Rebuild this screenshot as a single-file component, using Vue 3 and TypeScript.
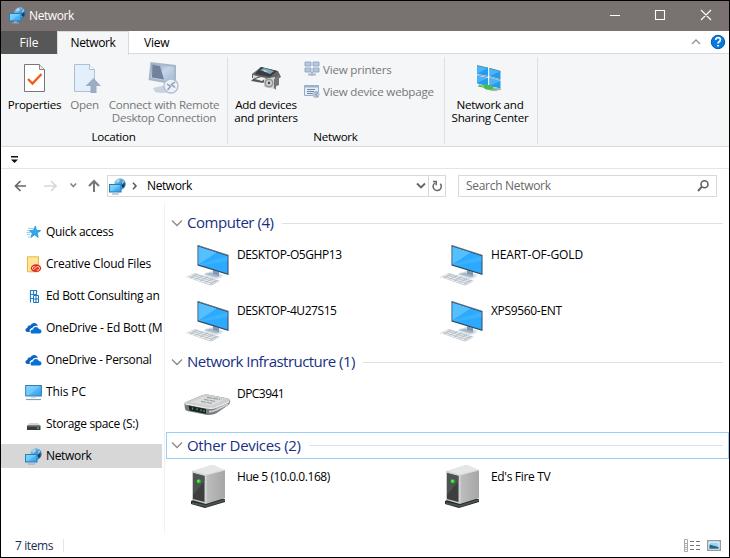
<script setup lang="ts">
interface NavItem { label: string; icon: string; fit: string; selected?: boolean }
interface Device { name: string; icon: string; fit: string }
interface Group { title: string; cls: string; devices: Device[] }

const navItems: NavItem[] = [
  { label: 'Quick access', icon: 'star', fit: 'snug' },
  { label: 'Creative Cloud Files', icon: 'creative', fit: 'normal' },
  { label: 'Ed Bott Consulting an', icon: 'building', fit: 'snug' },
  { label: 'OneDrive - Ed Bott (M', icon: 'cloud', fit: 'normal' },
  { label: 'OneDrive - Personal', icon: 'cloud', fit: 'snug' },
  { label: 'This PC', icon: 'pc', fit: 'loose' },
  { label: 'Storage space (S:)', icon: 'drive', fit: 'snug' },
  { label: 'Network', icon: 'network', fit: 'snug', selected: true },
]

const groups: Group[] = [
  {
    title: 'Computer (4)',
    cls: 'computers',
    devices: [
      { name: 'DESKTOP-O5GHP13', icon: 'desktop', fit: 'tight' },
      { name: 'HEART-OF-GOLD', icon: 'desktop', fit: 'loose' },
      { name: 'DESKTOP-4U27S15', icon: 'desktop', fit: 'tight' },
      { name: 'XPS9560-ENT', icon: 'desktop', fit: 'snug' },
    ],
  },
  {
    title: 'Network Infrastructure (1)',
    cls: 'infrastructure',
    devices: [{ name: 'DPC3941', icon: 'router', fit: 'tighter' }],
  },
  {
    title: 'Other Devices (2)',
    cls: 'others',
    devices: [
      { name: 'Hue 5 (10.0.0.168)', icon: 'server', fit: 'tight' },
      { name: "Ed's Fire TV", icon: 'server', fit: 'snug' },
    ],
  },
]
</script>

<template>
  <div class="window">
    <svg class="defs" width="0" height="0" aria-hidden="true">
      <defs>
        <linearGradient id="gScreen" x1="0" y1="0" x2="1" y2="1">
          <stop offset="0" stop-color="#7fd4ff" /><stop offset="1" stop-color="#2b9df0" />
        </linearGradient>
        <linearGradient id="gGlobe" x1="0" y1="0" x2="1" y2="1">
          <stop offset="0" stop-color="#9fd3f0" /><stop offset=".5" stop-color="#4796cc" /><stop offset="1" stop-color="#174f87" />
        </linearGradient>
        <linearGradient id="gSide" x1="0" y1="0" x2="1" y2="0">
          <stop offset="0" stop-color="#bebebe" /><stop offset="1" stop-color="#a6a6a6" />
        </linearGradient>
        <linearGradient id="gFaded" x1="0" y1="0" x2="1" y2="1">
          <stop offset="0" stop-color="#8e9fba" /><stop offset=".5" stop-color="#c5d5e9" /><stop offset="1" stop-color="#9db5d5" />
        </linearGradient>
      </defs>
      <symbol id="i-network" viewBox="0 0 17 17">
        <circle cx="11" cy="6" r="5.7" fill="url(#gGlobe)" />
        <path d="M7 3 9 1 11 2 10 4 8 5zM12 1l2 1-1 3 2 2 1 1-1-5-3-3zM11 8l3 0-1 3z" fill="#b7def2" opacity=".8" />
        <path d="M15 4q2 3-1 6l-2-2 2-2z" fill="#123f72" />
        <rect x=".5" y="6.5" width="11.5" height="7.5" fill="url(#gScreen)" stroke="#2581b5" />
        <path d="M1 7h10L3 13H1z" fill="#88d8fb" opacity=".5" />
        <path d="M3 16h7" stroke="#8da4b4" /><path d="M5 15h3" stroke="#b5c4cd" />
      </symbol>
      <symbol id="i-star" viewBox="0 0 17 17">
        <path d="M10.3 2.2l1.2 4.2 4.2.2-3.5 2.5 1 4.3-3.5-2.6-3.8 2.6 1.4-4.3-3.2-2.5 4.1-.2z" fill="#2eaaf3" stroke="#1784cd" stroke-width=".7" />
        <path d="M3 4.5h5M2 6.5h3M1.5 8.5h4M2 10.5h3M3 13h2" stroke="#75c5ee" stroke-width=".8" />
      </symbol>
      <symbol id="i-creative" viewBox="0 0 17 17">
        <path d="M2.5.8h11v15h-11z" fill="#ffe596" stroke="#e4b846" />
        <ellipse cx="11" cy="12.2" rx="5.2" ry="3.9" fill="#e52b1e" />
        <path d="M11.6 14q1.4.6 2.5-.4 1-1.3-.1-2.6-1.4-1-2.8.2l-1.6 1.8q-1 .9-1.9 0-.8-1 .1-2 1.3-1 2.6.2" fill="none" stroke="#ffe7d6" stroke-width=".9" />
      </symbol>
      <symbol id="i-building" viewBox="0 0 17 17">
        <path d="M5.5 14.5V2M8.500 2v5M11.5 2v5M5 2.500h7M5 6.500h7M5 10.500h3" stroke="#2680c8" fill="none" stroke-width="1.2" />
        <path d="M8.5 7.5h5v7h-5zM11 8v6M9 11h4" fill="#fff" stroke="#1675c7" />
      </symbol>
      <symbol id="i-cloud" viewBox="0 0 17 17">
        <path d="M5 12H2.5C-.4 12-.1 8.2 2.3 8 2.5 5.5 4.3 5.4 5.3 5.6 7 2 12 2.3 12.8 6 9.7 5.2 8 6.3 7.4 8 4.9 8.2 4.2 10.3 5 12z" fill="#0866c1" />
        <path d="M7.3 13.6C4.7 13.3 4.9 9.5 8 9.5 8.7 6 13.2 6.4 13.8 9.1 17 9 17.4 13 14.6 13.6z" fill="#0871d4" />
      </symbol>
      <symbol id="i-pc" viewBox="0 0 17 17">
        <rect x=".7" y="1.5" width="15.7" height="10.5" fill="url(#gScreen)" stroke="#397aa7" />
        <path d="M1 2h14L4 11.5H1z" fill="#9be1ff" opacity=".35" /><path d="M1 15.5h15" stroke="#879eae" stroke-width="1.2" /><path d="M6 13.5h5" stroke="#cbd8df" />
      </symbol>
      <symbol id="i-drive" viewBox="0 0 17 17">
        <path d="M4.5 7H13l2.5 3H2z" fill="#d4d4d4" /><rect x="2" y="9.5" width="13.5" height="4.5" rx=".5" fill="#383b3b" />
        <path d="M2.5 10.3H15" stroke="#686b69" /><rect x="12" y="11.5" width="2" height="1.2" fill="#36e94d" />
      </symbol>
      <symbol id="i-desktop" viewBox="0 0 44 42">
        <path d="M19 28l7-2 12 4-4 3.3q-6 1.4-11 0L18 30z" fill="#dce3ea" />
        <path d="M18.5 29l7-1.5 9 3.4-4 1.6z" fill="#a9b9ca" /><path d="M27 25l6 2v4l-6-2z" fill="#8499ad" />
        <path d="M11.5.3l31 10V30l-31-9.500z" fill="#31475a" />
        <path d="M12.5 1.8l29 9.2v17.5l-29-9z" fill="#2caaff" />
        <path d="M12.5 1.8l18 5.8-18 11.7z" fill="#56c0ff" /><path d="M12.5 19.4L41.5 11v5L16 20.6z" fill="#47b7fb" opacity=".6" />
        <path d="M11.5.3l31 10" stroke="#667481" stroke-width=".8" />
        <path d="M0 32l9-4 25 8-9 4.5z" fill="#b8bec5" /><path d="M0 32l9-4 25 8-9 3.7z" fill="#edf0f3" />
        <path d="M3 31.2l24 7.4M6 30l24 7.3M8 28.8l24 7.3M4 33l8-4M9 34.5l8-4M14 36l8-4M19 37.4l8-4M24 39l8-4" stroke="#a9b3bc" stroke-width=".7" />
      </symbol>
      <symbol id="i-router" viewBox="0 0 47 22">
        <path d="M.5 10Q0 9 2 8L18 1.200Q21 0 25 .7L44 4.500Q47 5.500 46 8.500 46 10 43 12L32 19.500Q28 21.500 22 20.800L3 17Q.8 16 .8 14z" fill="#777c7e" />
        <path d="M.5 10Q0 9 2 8L18 1.200Q21 0 25 .7L44 4.500Q47 5.500 45 8L32 13.500q-4 1.600-10 .6z" fill="#cdd0d1" />
        <path d="M7 8.500L20 2.500 40 6 28 11.500z" fill="#dbdddd" />
        <path d="M17 7.500l12 2M20 5.500l12 2M23 3.500l13 2" stroke="#8f9597" stroke-width="1" stroke-dasharray="5 1" />
        <path d="M1.500 10L22 14q6 1 10-.500L45 8" fill="none" stroke="#f0f1f1" stroke-width="1.200" />
        <path d="M4.500 11.500L22 15v4.800L5.500 16.500z" fill="#1b2221" /><path d="M8.500 13.500v2M13 14.300v2M17 15.200v2M20 16v2" stroke="#46a66a" stroke-width="1.2" />
        <path d="M25 17.500q4 .3 7-1.500l12-6" fill="none" stroke="#c9cccc" stroke-width="2" />
      </symbol>
      <symbol id="i-server" viewBox="0 0 36 44">
        <path d="M0 36l13-6 21 4v3L14 43 0 39z" fill="#252a2c" /><path d="M1 37l14 3 19-6v2l-19 6-14-3z" fill="#4c5254" />
        <path d="M1 6L20 0q2-.4 4 .5L34 5 15 11z" fill="#e5e6e6" /><path d="M1 6l14 4v29L1 35z" fill="#cbcdcd" />
        <path d="M2 8l11.5 3v26L2 34z" fill="#3d3f3e" /><path d="M2 8l11.5 3v5L2 30z" fill="#555856" opacity=".8" />
        <path d="M15 10L34 5v28l-19 6z" fill="url(#gSide)" /><path d="M1 6l14 4 19-5M15 10v28" fill="none" stroke="#d8dada" />
        <circle cx="7.7" cy="16.3" r="2" fill="#1cdf2e" /><circle cx="7.3" cy="15.8" r=".8" fill="#83fc69" />
      </symbol>
    </svg>

    <header class="titlebar">
      <svg class="title-icon"><use href="#i-network" /></svg>
      <span class="title">Network</span>
      <svg class="caption-buttons" width="126" height="30" viewBox="0 0 126 30" fill="none" stroke="#fff" stroke-width="1.1">
        <path d="M7 14.5h10M52.5 9.5h9v9h-9zM98 9l10 10M108 9L98 19" />
      </svg>
    </header>

    <nav class="tabs">
      <span class="file">File</span><span class="tab active">Network</span><span class="tab view">View</span>
      <svg class="help" width="40" height="22" viewBox="0 0 40 22">
        <path d="M3 13l4-4 4 4" fill="none" stroke="#999" stroke-width="1.5" />
        <circle cx="29" cy="11" r="6.7" fill="#0879dd" stroke="#0757a6" />
        <path d="M26.7 9q0-2.3 2.4-2.3 2.3 0 2.3 2 0 1.4-1.5 2.2-.9.5-.9 1.5M29 14v1.5" fill="none" stroke="#fff" stroke-width="1.7" />
      </svg>
    </nav>

    <section class="ribbon">
      <div class="group location">
        <div class="tools">
          <div class="tool properties">
            <svg width="32" height="32" viewBox="0 0 32 32">
              <path d="M5.5 2.5h15l5 5v22h-20z" fill="#fff" stroke="#777" /><path d="M20.5 2.5v5h5" fill="#e8e8e8" stroke="#888" />
              <path d="M9 17l4.5 4.5 9-9.5" fill="none" stroke="#f25b16" stroke-width="2.3" />
            </svg><span>Properties</span>
          </div>
          <div class="tool open disabled">
            <svg width="32" height="32" viewBox="0 0 32 32">
              <path d="M5.5 2.5h15l5 5v22h-20z" fill="#e3effb" stroke="#aebed4" /><path d="M20.5 2.5v5h5" fill="#f5f8fd" stroke="#aebed4" />
              <path d="M16.5 24l8-8 7.500 8h-4.500v7h-6v-7z" fill="#9dacc5" />
            </svg><span>Open</span>
          </div>
          <div class="tool remote disabled">
            <svg width="34" height="32" viewBox="0 0 34 32">
              <path d="M3.5 0L29 3v20L1.5 18z" fill="#a9b6ca" /><path d="M4.5 2L27 5v15.500L3.5 16z" fill="url(#gFaded)" /><path d="M5.5 3l7.5 1 4 13.500-12-2z" fill="#71829c" />
              <path d="M6 26l13-3 10 3-6 4q-8 2-15 0z" fill="#c8d3e2" /><circle cx="24" cy="24" r="7" fill="#edf1f7" stroke="#b2bfd0" stroke-width="1.3" />
              <path d="M20 22l3.500 2.500-3 3.500M28 20l-3.500 2.500 3.500 3" fill="none" stroke="#8c9db4" stroke-width="1.5" />
            </svg><span>Connect with Remote<br>Desktop Connection</span>
          </div>
        </div>
        <div class="caption">Location</div>
      </div>
      <div class="group networking">
        <div class="tools">
          <div class="tool add">
            <svg width="32" height="32" viewBox="0 0 32 32">
              <path d="M2 12l9-7 17 4 3 6-8 5-21-4z" fill="#626667" /><path d="M5 12l6-7 16 4-7 6z" fill="#393d40" /><path d="M10 8l4-2 10 3-4 3z" fill="#7ba7bf" /><path d="M13 8l5 1-3 1z" fill="#c4e0eb" />
              <path d="M3 13l20 5v4L3 17z" fill="#d9dada" /><path d="M22 18l7-5v10l-7 3z" fill="#737778" /><path d="M3 17l7-3 8 2-5 5-12-2z" fill="#53595a" /><path d="M5 17l6-2 5 1-4 3z" fill="#eee" />
              <path d="M14 17l11-2v12l-11-2z" fill="#d1d3d4" /><circle cx="19" cy="21" r="4.5" fill="#919798" /><circle cx="19" cy="21" r="2.8" fill="#e1e2e2" /><circle cx="19" cy="21" r="1.4" fill="#4c5356" /><path d="M24 17v9l2 2V16z" fill="#6f7476" />
            </svg><span>Add devices<br>and printers</span>
          </div>
          <div class="views disabled">
            <div><svg width="18" height="18" viewBox="0 0 18 18"><path d="M1 2h6v4H1zM9 2h6v4H9zM1 8h6v4H1zM9 8h6v4H9z" fill="#b6c7de" stroke="#8ea5c5" stroke-width=".9" /><path d="M4 14.5h8M8 12v4" stroke="#a8b8cf" stroke-width="2" /></svg><span>View printers</span></div>
            <div><svg width="18" height="18" viewBox="0 0 18 18"><path d="M.5 3.5h14v10H.5z" fill="#e5edf7" stroke="#99abc5" /><path d="M.5 4.5h14" stroke="#9db0ca" stroke-width="2" /><path d="M3 7.5h8M3 9.5h7M3 11.5h6" stroke="#7388a6" /><circle cx="12" cy="12.5" r="3.5" fill="#b3c4da" /><path d="M11.5 9l2 2-2 2 2.5 2" fill="none" stroke="#8298b5" /></svg><span>View device webpage</span></div>
          </div>
        </div>
        <div class="caption">Network</div>
      </div>
      <div class="group sharing">
        <div class="tool">
          <svg width="32" height="32" viewBox="0 0 32 32">
            <path d="M3 3.500l11 2.500v8L3 12zM15.500 6.300l11 3v8l-11-3zM3 14l11 2v8L3 21.500zM15.500 16l11 3v7.500l-11-2.500z" fill="#219cf0" />
            <path d="M3 3.500L14 6 3 12zM15.500 6.300l11 3-11 5zM3 14l11 2-11 5zM15.500 16l11 3-11 5z" fill="#4bb3fb" />
            <path d="M3 3.500L14 6M15.500 6.300l11 3M3 13l11 1.800M15.500 15l11 3" stroke="#557b93" stroke-width=".7" /><path d="M11 22l8 2v2l4 1-3 1.500-8-1-3-2-5-1v-1z" fill="#45ba55" /><path d="M19 26l8 1-5 1M5 22.500l5 2M16 28l7 .5" fill="none" stroke="#9fbda3" stroke-width="1.4" />
          </svg><span>Network and<br>Sharing Center</span>
        </div>
      </div>
    </section>

    <div class="quickbar"><svg width="9" height="8" viewBox="0 0 9 8"><path d="M1 0h7v1.4H1zM1 3.5h7L4.5 7z" fill="#111" /></svg></div>

    <div class="navigation">
      <svg class="arrows" width="106" height="22" viewBox="0 0 106 22" fill="none" stroke-width="1.7">
        <path d="M25 11H14.500M19.500 6l-5 5 5 5" stroke="#686868" /><path d="M43 11h11M50 6l5 5-5 5" stroke="#d7d7d7" />
        <path d="M69.5 8.5l2.8 3 2.8-3" stroke="#888" /><path d="M93 17V6M88 11l5-5 5 5" stroke="#777" stroke-width="2" />
      </svg>
      <div class="address">
        <svg class="address-icon"><use href="#i-network" /></svg><svg width="10" height="10" viewBox="0 0 10 10"><path d="M3 1.8l3 3.2-3 3.2" fill="none" stroke="#555" stroke-width="1.5" /></svg><span class="place">Network</span>
        <svg class="drop" width="12" height="10" viewBox="0 0 12 10"><path d="M2 2.5l4 4 4-4" fill="none" stroke="#666" stroke-width="1.9" /></svg>
        <span class="refresh"><svg width="14" height="14" viewBox="0 0 14 14"><path d="M4.9 4A4.1 4.1 0 1 0 10.3 4.700M3 2.5h3.200v3.800" fill="none" stroke="#646464" stroke-width="1.5" /></svg></span>
      </div>
      <div class="search"><span>Search Network</span><svg width="14" height="14" viewBox="0 0 14 14"><circle cx="8.500" cy="5.3" r="3.5" fill="none" stroke="#606060" stroke-width="1.6" /><path d="M5.9 7.7L2 12" stroke="#666" stroke-width="2" /></svg></div>
    </div>

    <main>
      <aside>
        <div v-for="item in navItems" :key="item.label" class="nav-item" :class="{ selected: item.selected }">
          <svg><use :href="'#i-' + item.icon" /></svg><span :class="item.fit">{{ item.label }}</span>
        </div>
      </aside>
      <div class="content">
        <section v-for="group in groups" :key="group.title" :class="group.cls">
          <h2><svg width="12" height="9" viewBox="0 0 12 9"><path d="M1 1.5l5 5 5-5" fill="none" stroke="#8a8a8a" stroke-width="1.3" /></svg><span>{{ group.title }}</span><i /></h2>
          <div class="device-grid">
            <div v-for="device in group.devices" :key="device.name" class="device">
              <div class="thumb"><svg :class="device.icon"><use :href="'#i-' + device.icon" /></svg></div>
              <span :class="device.fit">{{ device.name }}</span>
            </div>
          </div>
        </section>
      </div>
    </main>

    <footer>
      <span class="count">7 items</span><i />
      <svg width="40" height="14" viewBox="0 0 40 14">
        <path d="M1.5.5h3v12h-3zM1 4.5h4M1 8.5h4" fill="none" stroke="#aaa" /><path d="M7 2.5h4M13 2.5h4M7 6.5h4M13 6.5h4M7 10.5h4M13 10.5h4" stroke="#777" />
        <path d="M3 6v1" stroke="#369be1" /><path d="M3 10v1" stroke="#d76c22" />
        <rect x="24.7" y="1.7" width="12.6" height="9.6" fill="#fff" stroke="#929ba1" stroke-width="1.4" /><path d="M26.5 3.5h9v6h-9z" fill="#98d4f3" /><path d="M26.5 5.5q4 1 9 2.500v1.500h-9z" fill="#286574" /><path d="M26.5 9h9" stroke="#1f70a5" />
      </svg>
    </footer>
  </div>
</template>

<style>
body { margin: 0; overflow: hidden; }
</style>
<style scoped>
* { box-sizing: border-box; }
.window { width: 730px; height: 558px; border: 1px solid #000; background: #fff; color: #000; display: flex; flex-direction: column; overflow: hidden; font-family: "Open Sans", sans-serif; font-size: 12px; line-height: 16px; white-space: nowrap; }
.defs { position: absolute; }
svg { display: block; flex: none; }
.titlebar { height: 30px; flex: none; background: #7a7171; color: #fff; display: flex; align-items: center; padding-left: 8px; }
.title-icon { width: 17px; height: 17px; margin-top: -1px; }
.title { margin-left: 3px; letter-spacing: -.4px; }
.caption-buttons { margin-left: auto; }
.tabs { height: 23px; flex: none; display: flex; align-items: stretch; line-height: 24px; position: relative; }
.file { width: 56px; text-align: center; color: #fff; background: #575757; }
.tab { width: 72px; text-align: center; border-bottom: 1px solid #d9dade; letter-spacing: -.4px; }
.tab.active { background: #f5f6f7; border: 1px solid #d9dade; border-bottom: 0; height: 24px; line-height: 22px; }
.tab.view { flex: 1; text-align: left; padding-left: 15px; letter-spacing: -.2px; }
.help { position: absolute; right: 0; top: 0; }
.ribbon { height: 93px; flex: none; background: #f5f6f7; border-bottom: 1px solid #d9dade; display: flex; padding-top: 3px; line-height: 13px; font-size: 11.6px; letter-spacing: -.25px; }
.group { height: 87px; border-right: 1px solid #dfe0e3; }
.location { width: 227px; }
.networking { width: 217px; }
.sharing { width: 93px; padding-right: 2px; }
.tools { display: flex; height: 73px; }
.tool { display: flex; flex-direction: column; align-items: center; text-align: center; padding-top: 5px; }
.tool span { margin-top: 4px; }
.properties { width: 67px; }
.open { width: 33px; }
.remote { width: 126px; letter-spacing: -.28px; }
.disabled { color: #777; }
.caption { text-align: center; line-height: 14px; padding-right: 1px; }
.add { width: 76px; }
.views { padding-top: 3px; display: grid; gap: 4px; align-content: start; letter-spacing: -.2px; }
.views div { display: flex; align-items: center; gap: 1px; height: 18px; }
.quickbar { height: 22px; flex: none; border-bottom: 1px solid #e5e5e5; padding: 9px 0 0 9px; }
.navigation { height: 34px; flex: none; display: flex; align-items: center; padding-right: 12px; }
.address { width: 339px; height: 22px; border: 1px solid #d9d9d9; display: flex; align-items: center; padding-left: 1px; }
.place { margin-left: 7px; letter-spacing: -.4px; }
.address-icon { width: 17px; height: 17px; margin-right: 4px; }
.drop { margin-left: auto; margin-right: 1px; }
.refresh { border-left: 1px solid #d9d9d9; height: 20px; width: 17px; display: flex; align-items: center; padding-left: 1px; }
.search { margin-left: 12px; width: 259px; height: 22px; border: 1px solid #d9d9d9; padding: 0 6px 0 7px; display: flex; align-items: center; justify-content: space-between; color: #686868; letter-spacing: -.3px; }
main { display: flex; height: 330px; flex: none; }
aside { width: 164px; border-right: 1px solid #f0f0f0; padding-top: 17px; }
.nav-item { width: 161px; height: 24px; margin-bottom: 8px; display: flex; align-items: center; padding-left: 24px; overflow: hidden; }
.nav-item svg { width: 17px; height: 17px; margin-right: 4px; }
.selected { background: #d7d7d7; }
.loose { letter-spacing: -.1px; }
.normal { letter-spacing: -.22px; }
.snug { letter-spacing: -.33px; }
.tight { letter-spacing: -.43px; }
.tighter { letter-spacing: -.55px; }
.content { flex: 1; padding-left: 1px; }
h2 { height: 28px; margin: 0 0 8px; font-size: 15px; font-weight: 400; color: #183084; display: flex; align-items: center; padding: 0 6px 0 5px; letter-spacing: -.45px; }
h2 svg { margin-right: 4px; }
h2 span { padding-bottom: 2px; }
h2 i { height: 1px; background: #e0e0e0; flex: 1; margin-left: 8px; }
.computers { height: 141px; padding-top: 6px; }
.infrastructure { height: 88px; padding-top: 4px; }
.infrastructure h2 { letter-spacing: -.54px; }
.others h2 { height: 27px; border: 1px solid #99cffa; padding: 0 5px 0 4px; margin-bottom: 6px; letter-spacing: -.34px; }
.device-grid { display: grid; grid-template-columns: 254px 254px; grid-auto-rows: 56px; padding-left: 17px; }
.device { display: flex; }
.device > span { margin-left: 6px; margin-top: 2px; }
.others .device > span { margin-top: 4px; }
.thumb { width: 48px; }
.desktop { width: 44px; height: 42px; margin-left: 3px; }
.router { width: 47px; height: 22px; margin: 10px 0 0 1px; }
.server { width: 36px; height: 44px; margin-left: 8px; }
footer { flex: 1; display: flex; align-items: center; padding: 1px 6px 0 14px; color: #183050; }
.count { letter-spacing: -.4px; }
footer i { width: 1px; height: 13px; background: #e4e4e4; margin-left: 10px; }
footer svg { margin-left: auto; }
</style>
